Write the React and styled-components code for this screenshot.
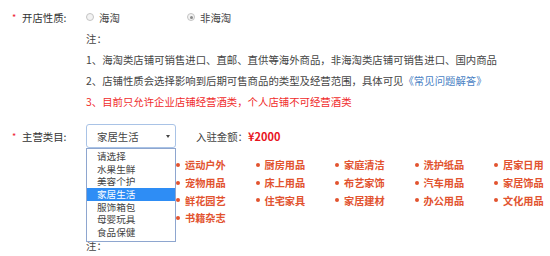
import styled, { createGlobalStyle } from "styled-components";

const GlobalStyle = createGlobalStyle`
  html, body {
    margin: 0;
    padding: 0;
    background: #fff;
  }
  body {
    font-family: "Noto Sans CJK SC", "Noto Sans", sans-serif;
    color: #333;
  }
`;

const Wrapper = styled.div`
  width: 550px;
  height: 256px;
  overflow: hidden;
  padding-top: 6px;
  box-sizing: border-box;
`;

const FieldRow = styled.div`
  display: flex;
  align-items: center;
  height: ${(p) => p.height || 22}px;
  margin-top: ${(p) => p.top || 0}px;
`;

const Label = styled.div`
  width: 86px;
  flex: none;
  display: flex;
  align-items: center;
  font-size: 10.4px;
  color: #333;
  box-sizing: border-box;
  padding-left: 12px;
`;

const Star = styled.span`
  color: #e23;
  font-size: 9px;
  width: 10px;
`;

const RadioOption = styled.label`
  width: 101px;
  display: flex;
  align-items: center;
  gap: 5px;
  font-size: 10.4px;
  color: #444;
`;

const RadioDot = styled.span`
  width: 6px;
  height: 6px;
  border-radius: 50%;
  border: 1px solid #c4c4c4;
  background: #f3f3f3;
  display: flex;
  align-items: center;
  justify-content: center;
  &::after {
    content: "";
    width: 3px;
    height: 3px;
    border-radius: 50%;
    background: ${(p) => (p.checked ? "#8a8a8a" : "transparent")};
  }
`;

const Notes = styled.div`
  margin-left: 86px;
  font-size: 10.4px;
  line-height: 21px;
  color: #444;
`;

const NoteLine = styled.div`
  color: ${(p) => (p.red ? "#f02b2b" : "#444")};
  white-space: nowrap;
`;

const Link = styled.a`
  color: #4a7fc4;
  text-decoration: none;
`;

const SelectWrap = styled.div`
  position: relative;
  width: 90px;
  height: 24px;
`;

const SelectBox = styled.div`
  height: 100%;
  box-sizing: border-box;
  border: 1px solid #a9c3e6;
  border-radius: 3px;
  background: #fff;
  display: flex;
  align-items: center;
  justify-content: space-between;
  padding: 0 5px 0 10px;
  font-size: 10.4px;
  color: #444;
`;

const Arrow = styled.svg`
  width: 4px;
  height: 3px;
  margin-top: 1px;
`;

const DropList = styled.ul`
  position: absolute;
  top: 100%;
  left: 0;
  width: 90px;
  box-sizing: border-box;
  margin: 0;
  padding: 1px 0 2px;
  list-style: none;
  background: #fff;
  border: 1px solid #8ea6cf;
  z-index: 2;
`;

const DropItem = styled.li`
  height: 12.7px;
  line-height: 12.7px;
  padding-left: 10px;
  font-size: 9.6px;
  color: ${(p) => (p.active ? "#fff" : "#444")};
  background: ${(p) => (p.active ? "#2e8df5" : "transparent")};
`;

const Amount = styled.div`
  margin-left: 20px;
  font-size: 10.4px;
  color: #444;
`;

const Price = styled.span`
  color: #e8141e;
  font-weight: bold;
  font-size: 11px;
`;

const CategoryGrid = styled.div`
  margin: 8px 0 0 176px;
  display: grid;
  grid-template-columns: repeat(5, 79.5px);
  grid-template-rows: repeat(4, 17.7px);
  grid-auto-flow: column;
`;

const Category = styled.div`
  display: flex;
  align-items: center;
  gap: 5px;
  font-size: 10.2px;
  font-weight: bold;
  color: #e2532f;
  white-space: nowrap;
  &::before {
    content: "";
    width: 4px;
    height: 4px;
    border-radius: 50%;
    background: #e2532f;
  }
`;

const FootNote = styled.div`
  margin: 8px 0 0 86px;
  font-size: 10.4px;
  line-height: 21px;
  color: #444;
`;

const options = ["请选择", "水果生鲜", "美容个护", "家居生活", "服饰箱包", "母婴玩具", "食品保健"];

const columns = [
  ["运动户外", "宠物用品", "鲜花园艺", "书籍杂志"],
  ["厨房用品", "床上用品", "住宅家具"],
  ["家庭清洁", "布艺家饰", "家居建材"],
  ["洗护纸品", "汽车用品", "办公用品"],
  ["居家日用", "家居饰品", "文化用品"],
];

const App = () => {
  return (
    <Wrapper>
      <GlobalStyle />
      <FieldRow>
        <Label>
          <Star>*</Star>开店性质:
        </Label>
        <RadioOption>
          <RadioDot />
          海淘
        </RadioOption>
        <RadioOption>
          <RadioDot checked />
          非海淘
        </RadioOption>
      </FieldRow>
      <Notes>
        <NoteLine>注：</NoteLine>
        <NoteLine>1、海淘类店铺可销售进口、直邮、直供等海外商品，非海淘类店铺可销售进口、国内商品</NoteLine>
        <NoteLine>
          2、店铺性质会选择影响到后期可售商品的类型及经营范围，具体可见<Link href="#">《常见问题解答》</Link>
        </NoteLine>
        <NoteLine red>3、目前只允许企业店铺经营酒类，个人店铺不可经营酒类</NoteLine>
      </Notes>
      <FieldRow height={24} top={12}>
        <Label>
          <Star>*</Star>主营类目:
        </Label>
        <SelectWrap>
          <SelectBox>
            家居生活
            <Arrow viewBox="0 0 4 3">
              <path d="M0 0H4L2 3Z" fill="#444" />
            </Arrow>
          </SelectBox>
          <DropList>
            {options.map((o) => (
              <DropItem key={o} active={o === "家居生活"}>
                {o}
              </DropItem>
            ))}
          </DropList>
        </SelectWrap>
        <Amount>
          入驻金额：<Price>¥2000</Price>
        </Amount>
      </FieldRow>
      <CategoryGrid>
        {columns.map((col, i) =>
          [0, 1, 2, 3].map((r) =>
            col[r] ? (
              <Category key={i + "-" + r}>{col[r]}</Category>
            ) : (
              <div key={i + "-" + r} />
            )
          )
        )}
      </CategoryGrid>
      <FootNote>注：</FootNote>
    </Wrapper>
  );
};

export default App;
